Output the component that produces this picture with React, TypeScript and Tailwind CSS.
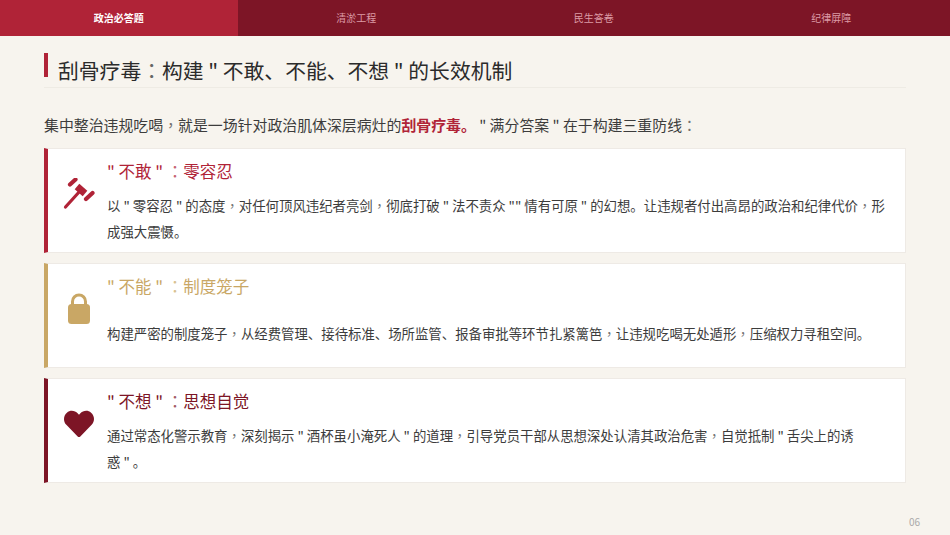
import type { ReactNode } from "react";
import { FaHeart } from "react-icons/fa";

const tabs = ["政治必答题", "清淤工程", "民生答卷", "纪律屏障"];

// the comma and colon sit centred in the original, which is how the TC cut draws them
const Comma = () => <span className="font-['Noto_Sans_CJK_TC',sans-serif] opacity-70">，</span>;
const Colon = () => <span className="font-['Noto_Sans_CJK_TC',sans-serif] opacity-70">：</span>;

function GavelIcon() {
  return (
    <svg viewBox="0 0 32 32" className="w-8 h-8 text-[#b02337]" stroke="currentColor" fill="none">
      <line x1="7" y1="6.5" x2="12.5" y2="1.5" strokeWidth="4.2" strokeLinecap="round" />
      <line x1="23" y1="21" x2="29.5" y2="15" strokeWidth="4.2" strokeLinecap="round" />
      <line x1="14" y1="8.5" x2="22" y2="15.5" strokeWidth="7" />
      <line x1="2.5" y1="29" x2="17" y2="13" strokeWidth="3.2" strokeLinecap="round" />
    </svg>
  );
}

function LockIcon() {
  return (
    <svg viewBox="0 0 22 31" className="w-[22px] h-[31px] text-[#c9a765]" fill="currentColor">
      <path
        d="M4.5 13 V8.5 a6.5 6.5 0 0 1 13 0 V13"
        fill="none"
        stroke="currentColor"
        strokeWidth="3"
      />
      <rect x="0" y="11" width="22" height="20" rx="3.5" />
    </svg>
  );
}

function Card({
  border,
  titleColor,
  title,
  icon,
  children,
}: {
  border: string;
  titleColor: string;
  title: string;
  icon: ReactNode;
  children: ReactNode;
}) {
  return (
    <div className={`h-[105px] bg-white border border-[#eeeae5] border-l-4 flex ${border}`}>
      <div className="w-[59px] shrink-0 pl-[15px] pt-[29px]">
        <div className="w-8 flex justify-center">{icon}</div>
      </div>
      <div className="flex-1 flex flex-col">
        <h3 className={`mt-[7px] h-[30px] text-[16.5px] leading-[30px] ${titleColor}`}>
          {title.split("：")[0]}
          <Colon />
          {title.split("：")[1]}
        </h3>
        <div className="flex-1 pb-[3px] flex items-center">
          <p className="text-[13.4px] leading-[26px] text-[#3c3c3c]">{children}</p>
        </div>
      </div>
    </div>
  );
}

export default function App() {
  return (
    <div className="w-[950px] h-[535px] bg-[#f7f4ee] flex flex-col overflow-hidden font-['Noto_Sans_CJK_SC','Noto_Sans',sans-serif]">
      {/* Top nav */}
      <div className="h-9 shrink-0 flex bg-[#7d1526]">
        {tabs.map((t, i) => (
          <div
            key={t}
            className={`w-[237.5px] pb-px flex items-center justify-center text-[10px] ${
              i === 0 ? "bg-[#b02337] text-white font-bold" : "text-[#dc9aa5]"
            }`}
          >
            {t}
          </div>
        ))}
      </div>

      <div className="pl-11 pr-11 flex-1 flex flex-col">
        {/* Heading */}
        <div className="mt-[17px] h-[35px] border-b border-[#eeebe4] flex">
          <div className="w-1 h-6 bg-[#b02337]" />
          <h1 className="ml-[10px] text-[20.8px] leading-[35px] text-[#2b2b2b]">
            刮骨疗毒
            <Colon />
            构建 " 不敢、不能、不想 " 的长效机制
          </h1>
        </div>

        <p className="mt-[25px] text-[14.9px] leading-6 text-[#3c3c3c]">
          集中整治违规吃喝
          <Comma />
          就是一场针对政治肌体深层病灶的<span className="font-bold text-[#b02337]">刮骨疗毒。</span> " 满分答案 " 在于构建三重防线
          <Colon />
        </p>

        <div className="mt-[11px] flex flex-col gap-[10px]">
          <Card
            border="border-l-[#b02337]"
            titleColor="text-[#b02337]"
            title={'" 不敢 " ：零容忍'}
            icon={<GavelIcon />}
          >
            以 " 零容忍 " 的态度
            <Comma />
            对任何顶风违纪者亮剑
            <Comma />
            彻底打破 " 法不责众 "" 情有可原 " 的幻想。让违规者付出高昂的政治和纪律代价
            <Comma />
            形
            <br />
            成强大震慑。
          </Card>
          <Card
            border="border-l-[#c9a765]"
            titleColor="text-[#c9a765]"
            title={'" 不能 " ：制度笼子'}
            icon={<LockIcon />}
          >
            构建严密的制度笼子
            <Comma />
            从经费管理、接待标准、场所监管、报备审批等环节扎紧篱笆
            <Comma />
            让违规吃喝无处遁形
            <Comma />
            压缩权力寻租空间。
          </Card>
          <Card
            border="border-l-[#7d1526]"
            titleColor="text-[#7d1526]"
            title={'" 不想 " ：思想自觉'}
            icon={<FaHeart className="w-[30px] h-[32px] text-[#7d1526]" />}
          >
            通过常态化警示教育
            <Comma />
            深刻揭示 " 酒杯虽小淹死人 " 的道理
            <Comma />
            引导党员干部从思想深处认清其政治危害
            <Comma />
            自觉抵制 " 舌尖上的诱
            <br />
            惑 " 。
          </Card>
        </div>

        <div className="mt-auto mb-[6px] -mr-[14px] text-right text-[10px] leading-[14px] text-[#aaaaaa]">06</div>
      </div>
    </div>
  );
}
